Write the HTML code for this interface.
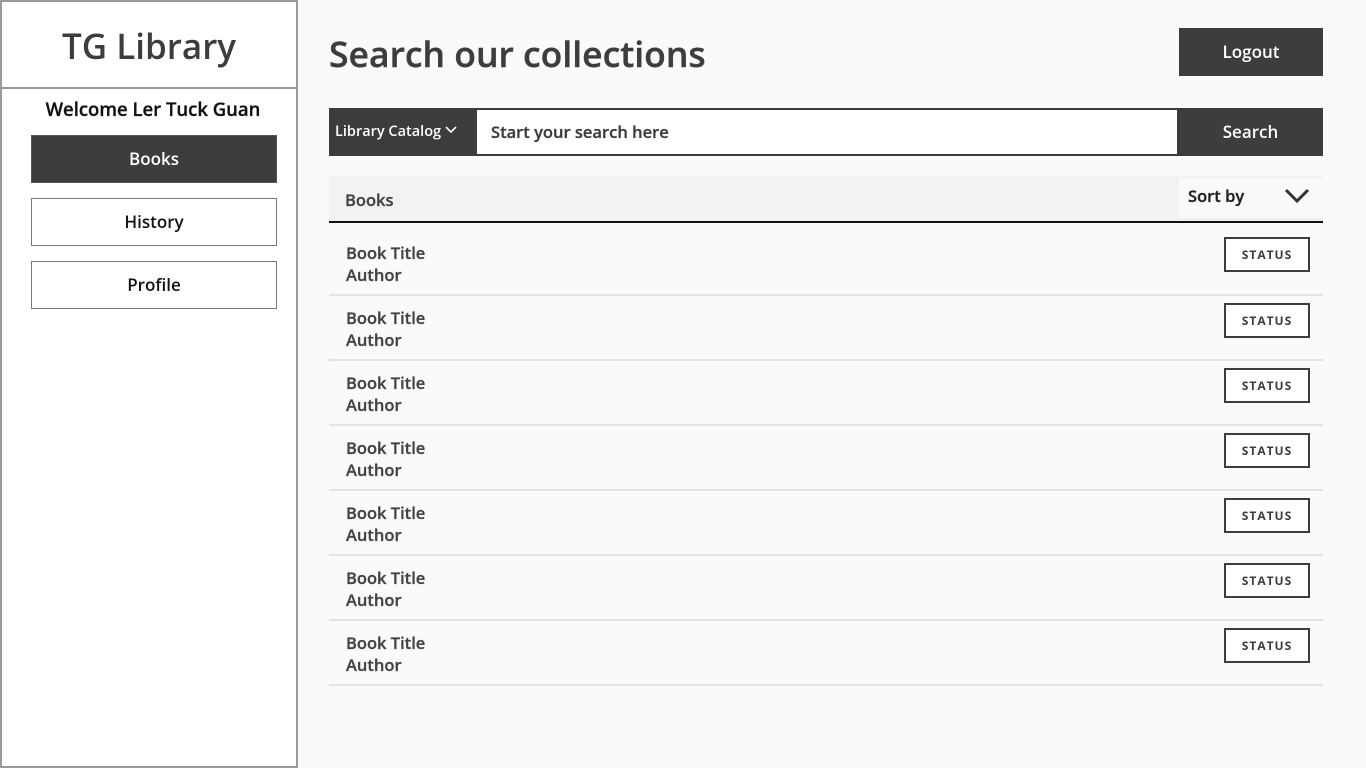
<!DOCTYPE html>
<html><head><style>
*{margin:0;padding:0;box-sizing:border-box}
body{width:1366px;height:768px;background:#fafafa;font-family:"Open Sans","Liberation Sans",sans-serif;color:#3d3d3d;position:relative;overflow:hidden}
.a{position:absolute}
.side{left:0;top:0;width:298px;height:768px;border:2px solid #9a9a9a;background:#fff}
.hdr{left:0;top:0;width:294px;height:87px;border-bottom:2px solid #9a9a9a;text-align:center;font-size:35px;font-weight:600;line-height:90px;color:#3d3d3d}
.btn{width:246px;height:48px;border:1px solid #777;text-align:center;line-height:46px;font-size:17px;font-weight:600;color:#111;background:#fff}
.dark{background:#3d3d3d;color:#fff;border-color:#555}
.row{left:329px;width:994px;height:65px;border-bottom:2px solid #e3e3e3}
.row .t{position:absolute;left:17px;top:17px;font-size:16.5px;font-weight:600;line-height:22px;color:#444;-webkit-text-stroke:0.3px #444}
.st{position:absolute;left:895px;top:12px;width:86px;height:35px;border:2px solid #3d3d3d;background:#fff;font-size:12px;font-weight:700;letter-spacing:1px;text-align:center;line-height:31px;color:#3d3d3d}
</style></head><body>
<div class="a side">
<div class="a hdr">TG Library</div>
<div class="a" style="left:4px;top:95px;width:294px;text-align:center;font-size:18.5px;font-weight:600;color:#111;-webkit-text-stroke:0.3px #111">Welcome Ler Tuck Guan</div>
<div class="a btn dark" style="left:29px;top:133px">Books</div>
<div class="a btn" style="left:29px;top:196px">History</div>
<div class="a btn" style="left:29px;top:259px">Profile</div>
</div>
<div class="a" style="left:329px;top:29px;font-size:35.5px;font-weight:600;line-height:50px;color:#3d3d3d;-webkit-text-stroke:0.4px #3d3d3d">Search our collections</div>
<div class="a dark" style="left:1179px;top:28px;width:144px;height:48px;background:#3d3d3d;color:#fff;text-align:center;line-height:48px;font-size:17px;font-weight:600">Logout</div>
<div class="a" style="left:329px;top:108px;width:994px;height:48px;background:#3d3d3d"></div>
<div class="a" style="left:335px;top:108px;line-height:48px;color:#fff;font-size:14.5px;font-weight:600">Library Catalog <svg width="12" height="8" viewBox="0 0 12 8" style="vertical-align:2px"><path d="M1 1l5 5 5-5" stroke="#fff" stroke-width="1.6" fill="none"/></svg></div>
<div class="a" style="left:477px;top:110px;width:700px;height:44px;background:#fff;font-size:16.5px;font-weight:600;line-height:44px;padding-left:14px;color:#3d3d3d;-webkit-text-stroke:0.3px #3d3d3d">Start your search here</div>
<div class="a" style="left:1178px;top:108px;width:145px;line-height:48px;text-align:center;color:#fff;font-size:17px;font-weight:600">Search</div>
<div class="a" style="left:329px;top:176px;width:994px;height:47px;background:#f2f2f2;border-bottom:2px solid #111"></div>
<div class="a" style="left:345px;top:188px;font-size:16.5px;font-weight:600;line-height:24px;color:#444;-webkit-text-stroke:0.3px #444">Books</div>
<div class="a" style="left:1179px;top:178px;width:144px;height:40px;background:#f9f9f9"></div>
<div class="a" style="left:1188px;top:184px;font-size:16.5px;font-weight:600;line-height:24px;color:#222;-webkit-text-stroke:0.3px #222">Sort by</div>
<svg class="a" style="left:1284px;top:188px" width="26" height="16" viewBox="0 0 26 16"><path d="M2 2l11 11 11-11" stroke="#333" stroke-width="3" fill="none"/></svg>
<div class="a row" style="top:225px;height:71px"><div class="t" style="top:17px">Book Title<br>Author</div><div class="st">STATUS</div></div>
<div class="a row" style="top:296px"><div class="t" style="top:11px">Book Title<br>Author</div><div class="st" style="top:7px">STATUS</div></div>
<div class="a row" style="top:361px"><div class="t" style="top:11px">Book Title<br>Author</div><div class="st" style="top:7px">STATUS</div></div>
<div class="a row" style="top:426px"><div class="t" style="top:11px">Book Title<br>Author</div><div class="st" style="top:7px">STATUS</div></div>
<div class="a row" style="top:491px"><div class="t" style="top:11px">Book Title<br>Author</div><div class="st" style="top:7px">STATUS</div></div>
<div class="a row" style="top:556px"><div class="t" style="top:11px">Book Title<br>Author</div><div class="st" style="top:7px">STATUS</div></div>
<div class="a row" style="top:621px"><div class="t" style="top:11px">Book Title<br>Author</div><div class="st" style="top:7px">STATUS</div></div>
</body></html>
